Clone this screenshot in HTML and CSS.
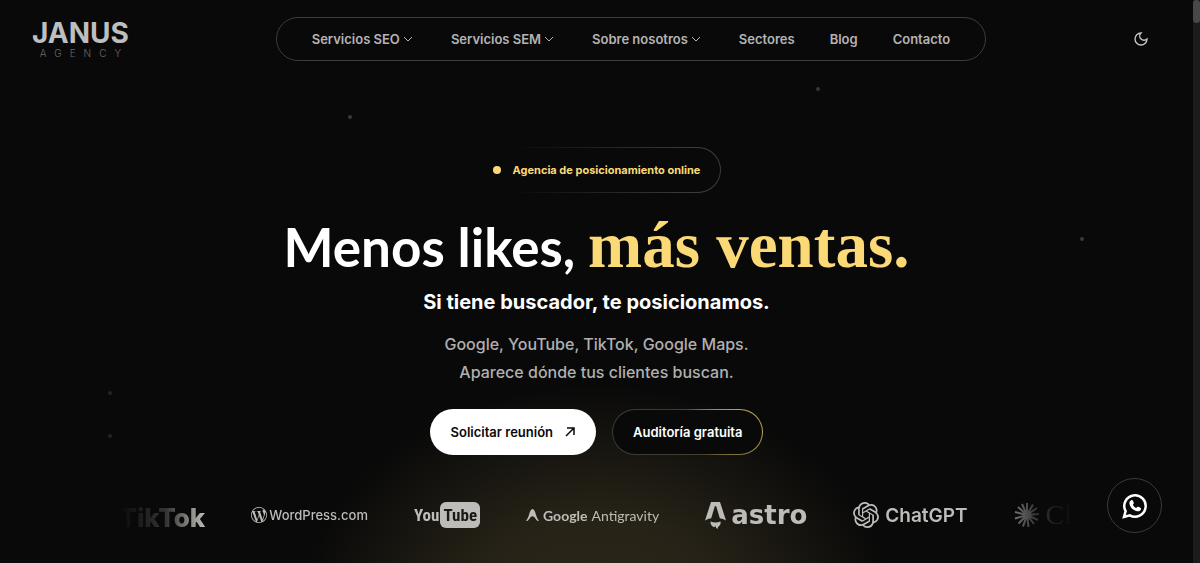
FILE: index.html
```
<!DOCTYPE html>
<html lang="es">
<head>
<meta charset="UTF-8" />
<meta name="viewport" content="width=device-width, initial-scale=1" />
<title>Janus Agency - Agencia de posicionamiento online</title>
<link rel="stylesheet" href="styles.css">
</head>
<body>

<!-- Partículas de fondo -->
<div class="particles" aria-hidden="true">
  <span class="particle p1"></span>
  <span class="particle gold p2"></span>
  <span class="particle p3"></span>
  <span class="particle dim p4"></span>
  <span class="particle dim p5"></span>
</div>

<header class="header">
  <a class="brand" href="#">
    <span class="brand-name">JANUS</span>
    <span class="brand-sub">AGENCY</span>
  </a>

  <nav class="nav">
    <button type="button">Servicios SEO
      <svg class="chevron" viewBox="0 0 10 6"><path d="M1 1l4 4 4-4"/></svg>
    </button>
    <button type="button">Servicios SEM
      <svg class="chevron" viewBox="0 0 10 6"><path d="M1 1l4 4 4-4"/></svg>
    </button>
    <button type="button">Sobre nosotros
      <svg class="chevron" viewBox="0 0 10 6"><path d="M1 1l4 4 4-4"/></svg>
    </button>
    <a href="#">Sectores</a>
    <a href="#">Blog</a>
    <a href="#">Contacto</a>
  </nav>

  <button type="button" class="theme-toggle" aria-label="Cambiar tema">
    <svg viewBox="0 0 24 24"><path d="M12 3a6 6 0 0 0 9 9 9 9 0 1 1-9-9z"/></svg>
  </button>
</header>

<main class="hero">
  <div class="badge"><span class="badge-dot"></span>Agencia de posicionamiento online</div>

  <h1>Menos likes, <span class="accent">más ventas.</span></h1>
  <h2>Si tiene buscador, te posicionamos.</h2>
  <p>Google, YouTube, TikTok, Google Maps.<br>Aparece dónde tus clientes buscan.</p>

  <div class="actions">
    <a class="btn btn-primary" href="#">Solicitar reunión
      <svg viewBox="0 0 10 10"><path d="M1 9l8-8M2 1h7v7"/></svg>
    </a>
    <a class="btn btn-outline" href="#">Auditoría gratuita</a>
  </div>

  <div class="logos">
    <div class="logo tiktok">TikTok</div>

    <div class="logo wordpress">
      <svg viewBox="0 0 24 24"><path d="M21.469 6.825c.84 1.537 1.318 3.3 1.318 5.175 0 3.979-2.156 7.456-5.363 9.325l3.295-9.527c.615-1.54.82-2.771.82-3.864 0-.405-.026-.78-.07-1.11m-7.981.105c.647-.03 1.232-.105 1.232-.105.582-.075.514-.93-.067-.899 0 0-1.755.135-2.88.135-1.064 0-2.85-.15-2.85-.15-.585-.03-.661.855-.075.885 0 0 .54.061 1.125.09l1.68 4.605-2.37 7.08L5.354 6.9c.649-.03 1.234-.1 1.234-.1.585-.075.516-.93-.065-.896 0 0-1.746.138-2.874.138-.2 0-.438-.008-.69-.015C4.911 3.15 8.235 1.215 12 1.215c2.809 0 5.365 1.072 7.286 2.833-.046-.003-.091-.009-.141-.009-1.06 0-1.812.923-1.812 1.914 0 .89.513 1.643 1.06 2.531.411.72.89 1.643.89 2.977 0 .915-.354 1.994-.821 3.479l-1.075 3.585-3.9-11.61.001.014zM12 22.784c-1.059 0-2.081-.153-3.048-.437l3.237-9.406 3.315 9.087c.024.053.05.101.078.149-1.12.393-2.325.609-3.582.609M1.211 12c0-1.564.336-3.05.935-4.39L7.29 21.709C3.694 19.96 1.212 16.271 1.211 12M12 0C5.385 0 0 5.385 0 12s5.385 12 12 12 12-5.385 12-12S18.615 0 12 0"/></svg>
      WordPress.com
    </div>

    <div class="logo youtube">You<span class="tube">Tube</span></div>

    <div class="logo antigravity">
      <svg viewBox="0 0 13 12"><path d="M6.500 0C8.200 0 9 2.600 9.900 5.400c.9 2.800 1.700 4.600 2.700 5.600.6.600-.3 1.200-1.200.7C9.500 10.600 8.600 7.300 6.500 7.300S3.500 10.600 1.600 11.700c-.9.500-1.800-.1-1.200-.7 1-1 1.800-2.800 2.700-5.600C4 2.600 4.800 0 6.500 0z"/></svg>
      <b>Google</b> Antigravity
    </div>

    <div class="logo astro">
      <svg viewBox="0 0 21 27"><path d="M6 0h9l6 18.500q-3-1.700-6.200-2.300L11.300 4.600q-.8-1.200-1.600 0L6.200 16.200Q3 16.800 0 18.500zM5.600 19.500q4.900 2.200 9.800 0 .9 2.900-1.300 4.400-1.500 1-1.600 3-1.700-.6-1.900-2.700-.9.200-1.300 1.100Q5 23.500 5.600 19.500z"/></svg>
      astro
    </div>

    <div class="logo chatgpt">
      <svg viewBox="0 0 24 24"><path d="M22.2819 9.8211a5.9847 5.9847 0 0 0-.5157-4.9108 6.0462 6.0462 0 0 0-6.5098-2.9A6.0651 6.0651 0 0 0 4.9807 4.1818a5.9847 5.9847 0 0 0-3.9977 2.9 6.0462 6.0462 0 0 0 .7427 7.0966 5.98 5.98 0 0 0 .511 4.9107 6.051 6.051 0 0 0 6.5146 2.9001A5.9847 5.9847 0 0 0 13.2599 24a6.0557 6.0557 0 0 0 5.7718-4.2058 5.9894 5.9894 0 0 0 3.9977-2.9001 6.0557 6.0557 0 0 0-.7475-7.0729zm-9.022 12.6081a4.4755 4.4755 0 0 1-2.8764-1.0408l.1419-.0804 4.7783-2.7582a.7948.7948 0 0 0 .3927-.6813v-6.7369l2.02 1.1686a.071.071 0 0 1 .038.052v5.5826a4.504 4.504 0 0 1-4.4945 4.4944zm-9.6607-4.1254a4.4708 4.4708 0 0 1-.5346-3.0137l.142.0852 4.783 2.7582a.7712.7712 0 0 0 .7806 0l5.8428-3.3685v2.3324a.0804.0804 0 0 1-.0332.0615L9.74 19.9502a4.4992 4.4992 0 0 1-6.1408-1.6464zM2.3408 7.8956a4.485 4.485 0 0 1 2.3655-1.9728V11.6a.7664.7664 0 0 0 .3879.6765l5.8144 3.3543-2.0201 1.1685a.0757.0757 0 0 1-.071 0l-4.8303-2.7865A4.504 4.504 0 0 1 2.3408 7.872zm16.5963 3.8558L13.1038 8.364 15.1192 7.2a.0757.0757 0 0 1 .071 0l4.8303 2.7913a4.4944 4.4944 0 0 1-.6765 8.1042v-5.6772a.79.79 0 0 0-.407-.667zm2.0107-3.0231l-.142-.0852-4.7735-2.7818a.7759.7759 0 0 0-.7854 0L9.409 9.2297V6.8974a.0662.0662 0 0 1 .0284-.0615l4.8303-2.7866a4.4992 4.4992 0 0 1 6.6802 4.66zM8.3065 12.863l-2.02-1.1638a.0804.0804 0 0 1-.038-.0567V6.0742a4.4992 4.4992 0 0 1 7.3757-3.4537l-.142.0805L8.704 5.459a.7948.7948 0 0 0-.3927.6813zm1.0976-2.3654l2.602-1.4998 2.6069 1.4998v2.9994l-2.5974 1.4997-2.6067-1.4997Z"/></svg>
      ChatGPT
    </div>

    <div class="logo claude">
      <svg viewBox="0 0 26 26"><path d="M13 13V1M13 13l6-10.500M13 13l10-7M13 13l12-1M13 13l11 5M13 13l7 9M13 13l1.500 12M13 13L9 24.500M13 13l-8.500 8.500M13 13L1 16.500M13 13L1 10M13 13L4 5M13 13L8 2"/></svg>
      Claude
    </div>
  </div>
</main>

<a class="whatsapp" href="#" aria-label="WhatsApp">
  <svg viewBox="0 0 26 26">
    <path class="bubble" d="M3.600 18.200A10.700 10.700 0 1 1 7.800 22.400L2 24z"/>
    <path class="phone" d="M9.300 7.200c.6-.4 1.200-.2 1.500.4l.9 2c.2.500.1.900-.2 1.300l-.7.800c.8 1.500 1.900 2.600 3.500 3.400l.9-1c.3-.4.7-.5 1.200-.3l2 .9c.6.300.8.800.5 1.500-.5 1.500-1.800 2.200-3.300 2-4.400-.7-7.500-3.800-8.200-7.800-.2-1.400.6-2.500 1.900-3.200z"/>
  </svg>
</a>

<div class="scrollbar" aria-hidden="true"><div class="scrollbar-thumb"></div></div>

</body>
</html>
```
FILE: styles.css
```
* {
  box-sizing: border-box;
}
body {
  margin: 0;
  padding-right: 7px;
  min-height: 100vh;
  background: #090909;
  color: white;
  font-family: Inter, "Open Sans", sans-serif;
  overflow: hidden;
}
a {
  color: inherit;
  text-decoration: none;
}
button {
  background: none;
  border: none;
  padding: 0;
  color: inherit;
  font: inherit;
  cursor: pointer;
}
svg {
  display: block;
  flex: none;
  fill: currentColor;
}

/* Header */
.header {
  display: flex;
  justify-content: space-between;
  align-items: center;
  padding: 17px 44px 0 32px;
}
.brand {
  display: flex;
  flex-direction: column;
  align-items: center;
  color: #bebebe;
}
.brand-name {
  font-size: 28px;
  line-height: 28px;
  font-weight: bold;
}
.brand-sub {
  color: #6a6a6a;
  font-size: 10px;
  line-height: 12px;
  font-weight: 300;
  letter-spacing: 8px;
  margin-right: -8px;
}
.nav {
  display: flex;
  align-items: center;
  gap: 35px;
  height: 44px;
  padding: 0 35px;
  border: 1px solid #3c3c3c;
  border-radius: 22px;
  color: #b4b4b4;
  font-size: 13px;
  font-weight: 600;
}
.nav button {
  display: flex;
  align-items: center;
  gap: 3px;
  padding-right: 3px;
}
.chevron {
  width: 10px;
  height: 6px;
  fill: none;
  stroke: currentColor;
}
.theme-toggle {
  color: #c8c8c8;
}
.theme-toggle svg {
  width: 16px;
  height: 16px;
  fill: none;
  stroke: currentColor;
  stroke-width: 2;
}

/* Hero */
.hero {
  display: flex;
  flex-direction: column;
  align-items: center;
  padding-top: 86px;
  min-height: calc(100vh - 61px);
  text-align: center;
  background: radial-gradient(ellipse 300px 240px at 50% 112%, #2d281a 0%, #262217 45%, rgba(9,9,9,0) 100%);
}
.badge {
  display: flex;
  align-items: center;
  gap: 12px;
  height: 46px;
  padding: 0 20px;
  border: 1px solid transparent;
  border-radius: 23px;
  background: linear-gradient(#090909, #090909) padding-box, linear-gradient(90deg, #090909 15%, #3c3c3c 90%) border-box;
  color: #fbd976;
  font-size: 11px;
  font-weight: bold;
}
.badge-dot {
  width: 8px;
  height: 8px;
  border-radius: 50%;
  background: #fbd976;
}
h1 {
  margin: 18px 0 0;
  font-family: Lato, sans-serif;
  font-size: 53px;
  line-height: 68px;
  font-weight: bold;
}
.accent {
  color: #fbd976;
  font-family: "Liberation Serif", serif;
  font-size: 65px;
}
h2 {
  margin: 7px 0 0;
  font-size: 20px;
  line-height: 28px;
}
p {
  margin: 14px 0 0;
  color: #b0b0b0;
  font-size: 16px;
  line-height: 28px;
  font-weight: 500;
}
.actions {
  display: flex;
  gap: 16px;
  margin-top: 23px;
}
.btn {
  display: flex;
  align-items: center;
  gap: 12px;
  height: 46px;
  padding: 0 20px;
  border: 1px solid transparent;
  border-radius: 23px;
  font-size: 13px;
  font-weight: 600;
}
.btn svg {
  width: 10px;
  height: 10px;
  fill: none;
  stroke: currentColor;
  stroke-width: 1.500;
}
.btn-primary {
  background: white;
  color: #090909;
}
.btn-outline {
  background: linear-gradient(#090909, #090909) padding-box, conic-gradient(#4d452c, #bda45a 70deg, #bda45a 90deg, #4a432b 140deg, #3a3a38 240deg, #3a3a38 330deg, #4d452c) border-box;
}

/* Carrusel de logos */
.logos {
  display: flex;
  align-items: center;
  gap: 46px;
  width: 80%;
  height: 40px;
  margin-top: 40px;
  overflow: hidden;
  color: #bdbcb8;
  -webkit-mask-image: linear-gradient(90deg, transparent, rgba(0,0,0,0.25) 5%, black 9%, black 91%, rgba(0,0,0,0.25) 96%, transparent);
  mask-image: linear-gradient(90deg, transparent, rgba(0,0,0,0.25) 5%, black 9%, black 91%, rgba(0,0,0,0.25) 96%, transparent);
}
.logo {
  display: flex;
  align-items: center;
  flex: none;
  white-space: nowrap;
}
.tiktok {
  padding-top: 6px;
  font: 800 26px/34px Inter, sans-serif;
}
.wordpress {
  gap: 2px;
  font-size: 13px;
  font-weight: 500;
}
.wordpress svg {
  width: 16px;
  height: 16px;
}
.youtube {
  gap: 1px;
  font: bold 17px/26px "Liberation Sans Narrow", "Roboto Condensed", Roboto, sans-serif;
}
.tube {
  padding: 0 3px;
  border-radius: 6px;
  background: #bdbcb8;
  color: #1b1912;
}
.antigravity {
  gap: 4px;
  font-family: Lato, sans-serif;
  font-size: 14px;
}
.antigravity svg {
  width: 13px;
  height: 12px;
}
.astro {
  gap: 5px;
  font: bold 26px/28px "DejaVu Sans", sans-serif;
}
.astro svg {
  width: 21px;
  height: 27px;
}
.chatgpt {
  gap: 6px;
  font-size: 19px;
  font-weight: 600;
}
.chatgpt svg {
  width: 26px;
  height: 26px;
}
.claude {
  gap: 6px;
  font: 28px/40px "Liberation Serif", serif;
}
.claude svg {
  width: 26px;
  height: 26px;
  stroke: currentColor;
  stroke-width: 2;
}

/* Partículas */
.particle {
  position: absolute;
  width: 4px;
  height: 4px;
  border-radius: 50%;
  background: #3a3a3a;
}
.gold {
  background: #3b3727;
}
.dim {
  background: #242424;
}
.p1 { left: 29%; top: 115px; }
.p2 { left: 68%; top: 87px; }
.p3 { left: 90%; top: 237px; }
.p4 { left: 9%; top: 391px; }
.p5 { left: 9%; top: 434px; }

/* Botón flotante */
.whatsapp {
  position: fixed;
  right: 38px;
  bottom: 30px;
  display: flex;
  align-items: center;
  justify-content: center;
  width: 55px;
  height: 55px;
  border: 1px solid #3c3c3c;
  border-radius: 50%;
  background: #090909;
}
.whatsapp svg {
  width: 26px;
  height: 26px;
}
.bubble {
  fill: none;
  stroke: currentColor;
  stroke-width: 2.500;
}

.scrollbar {
  position: fixed;
  top: 0;
  right: 0;
  bottom: 0;
  width: 7px;
  background: #1b1b1b;
}
.scrollbar-thumb {
  height: 23px;
  border-radius: 4px;
  background: #484848;
}
```
